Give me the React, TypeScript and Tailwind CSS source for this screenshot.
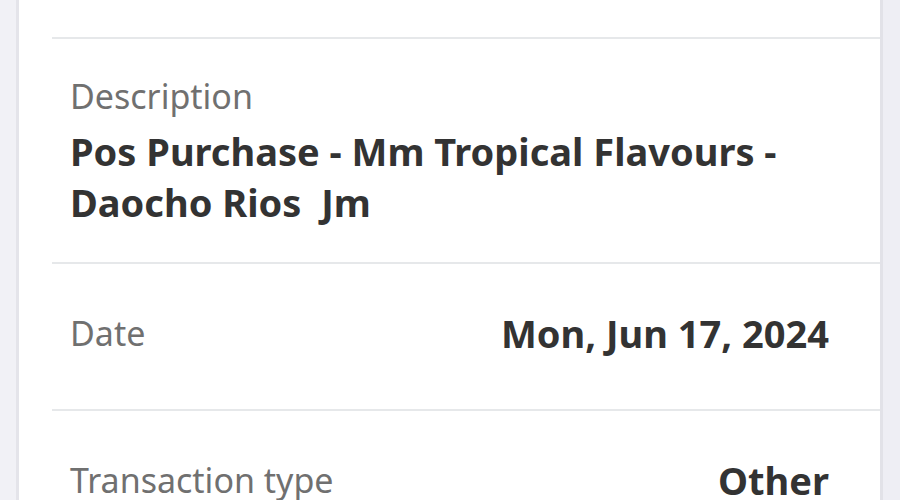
import React from "react";

export default function App() {
  const font = { fontFamily: '"Noto Sans", "Open Sans", sans-serif' };
  return (
    <div className="w-[900px] h-[500px] overflow-hidden bg-[#f0f0f5] flex" style={font}>
      <div className="w-[16px] shrink-0 bg-[#f1f1f6]" />
      <div className="w-[3px] shrink-0 bg-[#e4e4ea]" />
      <div className="w-[861px] shrink-0 bg-white flex flex-col">
        <div className="h-[37px] shrink-0" />
        <div className="ml-[33px] h-[2px] shrink-0 bg-[#e6e8ea]" />
        <div className="ml-[33px] pl-[18px] pr-[51px] h-[223px] shrink-0 flex flex-col">
          <div className="mt-[37px] text-[34px] leading-[40px] text-[#707070]">Description</div>
          <div className="mt-[10px] text-[38px] leading-[51px] font-bold text-[#333333]">
            Pos Purchase - Mm Tropical Flavours -<br />Daocho Rios&nbsp; Jm
          </div>
        </div>
        <div className="ml-[33px] h-[2px] shrink-0 bg-[#e6e8ea]" />
        <div className="ml-[33px] pl-[18px] pr-[51px] pb-[6px] h-[145px] shrink-0 flex items-center justify-between">
          <div className="text-[34px] text-[#707070]">Date</div>
          <div className="text-[38px] font-bold text-[#333333]">Mon, Jun 17, 2024</div>
        </div>
        <div className="ml-[33px] h-[2px] shrink-0 bg-[#e6e8ea]" />
        <div className="ml-[33px] pl-[18px] pr-[51px] pb-[6px] h-[145px] shrink-0 flex items-center justify-between">
          <div className="text-[34px] text-[#707070]">Transaction type</div>
          <div className="text-[38px] font-bold text-[#333333]">Other</div>
        </div>
      </div>
      <div className="w-[3px] shrink-0 bg-[#e2e2e8]" />
      <div className="flex-1 bg-[#eeeef4]" />
    </div>
  );
}
